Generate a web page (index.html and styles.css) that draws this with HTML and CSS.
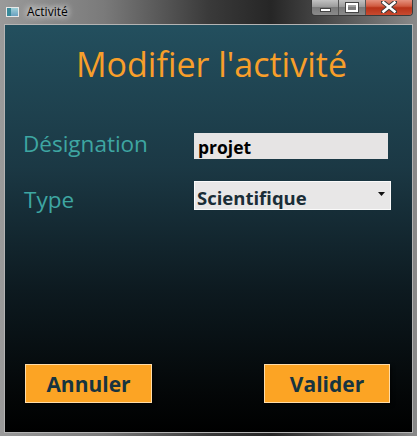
FILE: index.html
```html
<!DOCTYPE html>
<html lang="fr">
<head>
<meta charset="utf-8">
<title>Activité</title>
<link rel="stylesheet" href="styles.css">
</head>
<body>
<div class="window">
  <div class="titlebar">
    <div class="appicon"><span class="ic-a"></span><span class="ic-b"></span></div>
    <span class="title">Activité</span>
    <div class="controls">
      <div class="cbtn cmin"><span class="glyph-min"></span></div>
      <div class="cbtn cmax"><span class="glyph-max"></span></div>
      <div class="cbtn cclose">
        <svg width="16" height="12" viewBox="0 0 16 12"><path d="M2 1 L14 11 M14 1 L2 11" stroke="#3a3a3a" stroke-width="4.5" stroke-linecap="square"/><path d="M2.5 1.5 L13.5 10.5 M13.5 1.5 L2.5 10.5" stroke="#ffffff" stroke-width="2.6" stroke-linecap="square"/></svg>
      </div>
    </div>
  </div>
  <div class="client">
    <h1 class="heading">Modifier l'activité</h1>
    <div class="form">
      <div class="label label-des">Désignation</div>
      <div class="field input">projet</div>
      <div class="label label-type">Type</div>
      <div class="field select">
        <span>Scientifique</span>
        <svg class="caret" width="7" height="4" viewBox="0 0 7 4"><path d="M0 0 L7 0 L3.5 4 Z" fill="#111"/></svg>
      </div>
    </div>
    <div class="actions">
      <button class="action annuler">Annuler</button>
      <button class="action valider">Valider</button>
    </div>
  </div>
</div>
</body>
</html>
```
FILE: styles.css
```css
html, body {
  margin: 0;
  padding: 0;
  background: #6a6a6a;
}
.window {
  width: 417px;
  height: 436px;
  box-sizing: border-box;
  display: flex;
  flex-direction: column;
  padding: 0 4px 3px 4px;
  background: linear-gradient(90deg, #9a9a9a 0%, #7a7a7a 25%, #3a3a3a 50%, #262626 65%, #4a4a4a 78%, #8a8a8a 100%);
  font-family: "Open Sans", "DejaVu Sans", sans-serif;
}
.titlebar {
  height: 24px;
  display: flex;
  align-items: flex-start;
  position: relative;
}
.appicon {
  margin: 7px 0 0 2px;
  width: 13px;
  height: 10px;
  display: flex;
  background: #e8e8e8;
  padding: 1px;
  box-sizing: border-box;
}
.ic-a {
  width: 4px;
  background: #3a8a9a;
}
.ic-b {
  flex: 1;
  background: linear-gradient(180deg, #9fd0d8, #6aa0c0);
}
.title {
  margin: 4px 0 0 8px;
  font-size: 12px;
  color: #000;
  line-height: 16px;
  text-shadow: 0 0 6px #fff, 0 0 8px #fff;
}
.controls {
  margin-left: auto;
  margin-right: 0;
  display: flex;
  height: 16px;
  border: 1px solid #3a3a3a;
  border-top: none;
  border-radius: 0 0 4px 4px;
  overflow: hidden;
  margin-top: -1px;
}
.cbtn {
  display: flex;
  align-items: center;
  justify-content: center;
}
.cmin, .cmax {
  width: 26px;
  background: linear-gradient(180deg, #c8c8c8 0%, #9a9a9a 50%, #7a7a7a 51%, #8a8a8a 100%);
  border-right: 1px solid #555;
}
.glyph-min {
  width: 9px;
  height: 2px;
  margin-top: 6px;
  background: #fff;
  border: 1px solid #444;
}
.glyph-max {
  width: 8px;
  height: 5px;
  border: 2px solid #fff;
  outline: 1px solid #444;
}
.cclose {
  width: 46px;
  background: linear-gradient(180deg, #e89a88 0%, #d05a40 45%, #b83218 55%, #c84a30 100%);
}
.client {
  flex: 1;
  display: flex;
  flex-direction: column;
  border: 1px solid #b4b4b4;
  background: linear-gradient(180deg, #234f5e 0%, #1b3844 35%, #0d1a20 65%, #040708 90%, #000 100%);
}
.heading {
  margin: 17px 0 0 0;
  text-align: center;
  font-weight: 400;
  font-size: 34px;
  line-height: 44px;
  color: #f89f2a;
  padding-left: 6px;
}
.form {
  margin-top: 47px;
  display: grid;
  grid-template-columns: 171px 196px;
  grid-template-rows: 26px 29px;
  row-gap: 22px;
  padding-left: 18px;
}
.label {
  color: #3ea6a2;
  font-size: 22.5px;
  line-height: 26px;
}
.label-des {
  margin-top: -2px;
}
.label-type {
  margin-top: 6px;
  padding-left: 1px;
}
.field {
  box-sizing: border-box;
  font-weight: 700;
  display: flex;
  align-items: center;
}
.input {
  width: 194px;
  background: #e6e4e4;
  color: #000;
  padding: 2px 0 0 4px;
  font-size: 17.5px;
}
.select {
  width: 197px;
  background: #e8e7e7;
  border: 1px solid #fafafa;
  color: #1a2d36;
  font-size: 18.5px;
  padding: 3px 5px 0 2px;
  justify-content: space-between;
}
.caret {
  margin-top: -7px;
}
.actions {
  margin-top: auto;
  margin-bottom: 29px;
  display: flex;
  justify-content: space-between;
  padding: 0 22px 0 20px;
}
.action {
  height: 39px;
  background: #fca424;
  border: 1px solid #ffdca8;
  color: #17343f;
  font-family: "Open Sans", "DejaVu Sans", sans-serif;
  font-weight: 700;
  font-size: 21px;
  padding: 0;
  margin: 0;
  box-shadow: 2px 2px 3px rgba(0,0,0,0.5);
}
.annuler {
  width: 127px;
}
.valider {
  width: 126px;
}
```
